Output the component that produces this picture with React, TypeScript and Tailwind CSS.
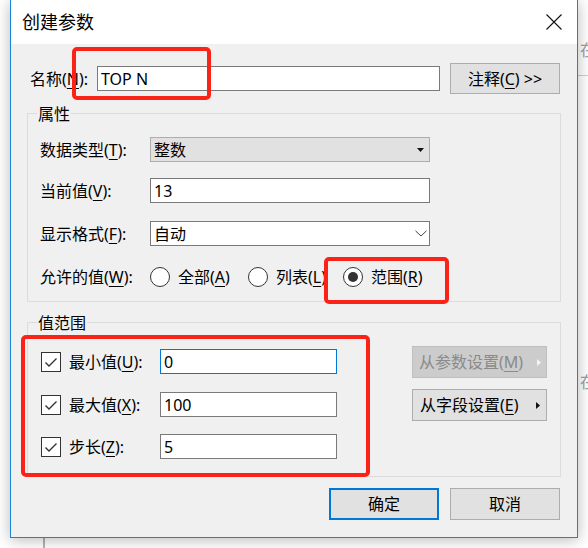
import React from "react";

// mnemonic letter, underlined like a Windows dialog access key
function Key({ k }: { k: string }) {
  return <span className="underline decoration-1 underline-offset-[3px]">{k}</span>;
}

function Radio({ label, checked = false, width }: { label: React.ReactNode; checked?: boolean; width: string }) {
  return (
    <div className={`flex items-center ${width}`}>
      <span className="flex h-[20px] w-[20px] items-center justify-center rounded-full border border-[#333333] bg-white">
        {checked ? <span className="h-[10px] w-[10px] rounded-full bg-[#333333]" /> : null}
      </span>
      <span className="ml-[8px] leading-[20px]">{label}</span>
    </div>
  );
}

function Check() {
  return (
    <span className="flex h-[20px] w-[20px] items-center justify-center border border-[#333333] bg-white">
      <svg width="18" height="18" viewBox="0 0 18 18">
        <polyline points="3.5,9.5 7,13 14.5,5.5" fill="none" stroke="#333" strokeWidth="1.4" />
      </svg>
    </span>
  );
}

function RangeRow({ label, value, focused = false, mt }: { label: React.ReactNode; value: string; focused?: boolean; mt: string }) {
  return (
    <div className={`flex h-[25px] items-center ${mt}`}>
      <Check />
      <span className="ml-[8px] w-[91px]">{label}</span>
      <input
        readOnly
        defaultValue={value}
        className={`h-[25px] w-[177px] border bg-white px-[3px] outline-none ${focused ? "border-[#0078d7]" : "border-[#7a7a7a]"}`}
      />
    </div>
  );
}

export default function App() {
  return (
    <div className="relative h-[548px] w-[588px] overflow-hidden bg-white font-['Noto_Sans','Noto_Sans_CJK_SC',sans-serif] text-[16px] text-black">
      {/* window behind the dialog */}
      <div className="absolute left-[43px] top-[538px] h-[20px] w-[2px] bg-[#b4b4b4]" />
      <div className="absolute left-[578px] top-[75px] h-px w-[10px] bg-[#cfcfcf]" />
      <span className="absolute left-[580px] top-[38px] text-[#a0a0a0]">在</span>
      <span className="absolute left-[580px] top-[370px] text-[#a0a0a0]">在</span>

      <div className="relative ml-[10px] flex h-[538px] w-[568px] flex-col border-x border-b border-[#1883d7] shadow-[0_2px_14px_rgba(0,0,0,0.28)]">
        {/* title bar */}
        <div className="flex h-[44px] items-center justify-between bg-white pl-[11px] pr-[15px]">
          <span className="text-[18px] leading-[24px]">创建参数</span>
          <svg width="16" height="16" viewBox="0 0 16 16">
            <path d="M0.5 0.5 L15.5 15.5 M15.5 0.5 L0.5 15.5" stroke="#111" strokeWidth="1.1" />
          </svg>
        </div>

        <div className="flex flex-1 flex-col bg-[#f0f0f0]">
          {/* name row */}
          <div className="mt-[19px] flex h-[31px] items-center pl-[19px]">
            <span className="w-[67px]">
              名称(<Key k="N" />):
            </span>
            <input
              readOnly
              defaultValue="TOP N"
              className="h-[25px] w-[343px] border border-[#7a7a7a] bg-white px-[3px] outline-none"
            />
            <button className="ml-[10px] h-[31px] w-[110px] border border-[#adadad] bg-[#e1e1e1]">
              注释(<Key k="C" />) &gt;&gt;
            </button>
          </div>

          {/* 属性 */}
          <div className="relative ml-[16px] mt-[19px] flex h-[189px] w-[534px] flex-col border border-[#dcdcdc] pl-[12px] pt-[23px]">
            <span className="absolute left-[9px] top-[-10px] bg-[#f0f0f0] px-[1px] leading-[20px]">属性</span>

            <div className="flex h-[25px] items-center">
              <span className="w-[110px]">
                数据类型(<Key k="T" />):
              </span>
              <div className="flex h-[25px] w-[280px] items-center justify-between border border-[#adadad] bg-[#e1e1e1] pl-[3px] pr-[5px]">
                <span>整数</span>
                <svg width="7" height="4" viewBox="0 0 7 4">
                  <polygon points="0,0 7,0 3.5,4" fill="#111" />
                </svg>
              </div>
            </div>

            <div className="mt-[16px] flex h-[25px] items-center">
              <span className="w-[110px]">
                当前值(<Key k="V" />):
              </span>
              <input
                readOnly
                defaultValue="13"
                className="h-[25px] w-[280px] border border-[#7a7a7a] bg-white px-[3px] outline-none"
              />
            </div>

            <div className="mt-[18px] flex h-[25px] items-center">
              <span className="w-[110px]">
                显示格式(<Key k="F" />):
              </span>
              <div className="flex h-[25px] w-[280px] items-center justify-between border border-[#7a7a7a] bg-white pl-[3px] pr-[2px]">
                <span>自动</span>
                <svg width="12" height="7" viewBox="0 0 12 7">
                  <polyline points="0.5,0.8 6,6 11.5,0.8" fill="none" stroke="#444" strokeWidth="1" />
                </svg>
              </div>
            </div>

            <div className="mt-[21px] flex h-[20px] items-center">
              <span className="w-[110px]">
                允许的值(<Key k="W" />):
              </span>
              <Radio width="w-[98px]" label={<>全部(<Key k="A" />)</>} />
              <Radio width="w-[95px]" label={<>列表(<Key k="L" />)</>} />
              <Radio width="w-[90px]" checked label={<>范围(<Key k="R" />)</>} />
            </div>
          </div>

          {/* 值范围 */}
          <div className="relative ml-[16px] mt-[20px] flex h-[155px] w-[534px] border border-[#dcdcdc]">
            <span className="absolute left-[9px] top-[-10px] bg-[#f0f0f0] px-[1px] leading-[20px]">值范围</span>

            <div className="flex flex-col pl-[13px] pt-[26px]">
              <RangeRow mt="mt-0" focused value="0" label={<>最小值(<Key k="U" />):</>} />
              <RangeRow mt="mt-[18px]" value="100" label={<>最大值(<Key k="X" />):</>} />
              <RangeRow mt="mt-[17px]" value="5" label={<>步长(<Key k="Z" />):</>} />
            </div>

            <div className="ml-auto mr-[13px] flex flex-col pt-[23px]">
              <button className="flex h-[32px] w-[135px] items-center justify-between border border-[#bfbfbf] bg-[#cccccc] pl-[6px] pr-[5px] text-[#8a8a8a]">
                <span>
                  从参数设置(<Key k="M" />)
                </span>
                <svg width="4" height="7" viewBox="0 0 4 7">
                  <polygon points="0,0 4,3.5 0,7" fill="#f4f4f4" />
                </svg>
              </button>
              <button className="mt-[11px] flex h-[32px] w-[135px] items-center justify-between border border-[#adadad] bg-[#e1e1e1] pl-[7px] pr-[6px]">
                <span>
                  从字段设置(<Key k="E" />)
                </span>
                <svg width="4" height="7" viewBox="0 0 4 7">
                  <polygon points="0,0 4,3.5 0,7" fill="#111" />
                </svg>
              </button>
            </div>
          </div>

          {/* dialog buttons */}
          <div className="mt-[11px] flex justify-end gap-[11px] pr-[17px]">
            <button className="h-[32px] w-[110px] border-2 border-[#0078d7] bg-[#e1e1e1]">确定</button>
            <button className="h-[32px] w-[110px] border border-[#adadad] bg-[#e1e1e1]">取消</button>
          </div>
        </div>
      </div>

      {/* red annotation boxes */}
      <div className="absolute left-[72px] top-[47px] h-[53px] w-[139px] rounded-[5px] border-[4px] border-[#fb2318]" />
      <div className="absolute left-[324px] top-[257px] h-[47px] w-[125px] rounded-[5px] border-[4px] border-[#fb2318]" />
      <div className="absolute left-[21px] top-[335px] h-[142px] w-[349px] rounded-[5px] border-[4px] border-[#fb2318]" />
    </div>
  );
}
